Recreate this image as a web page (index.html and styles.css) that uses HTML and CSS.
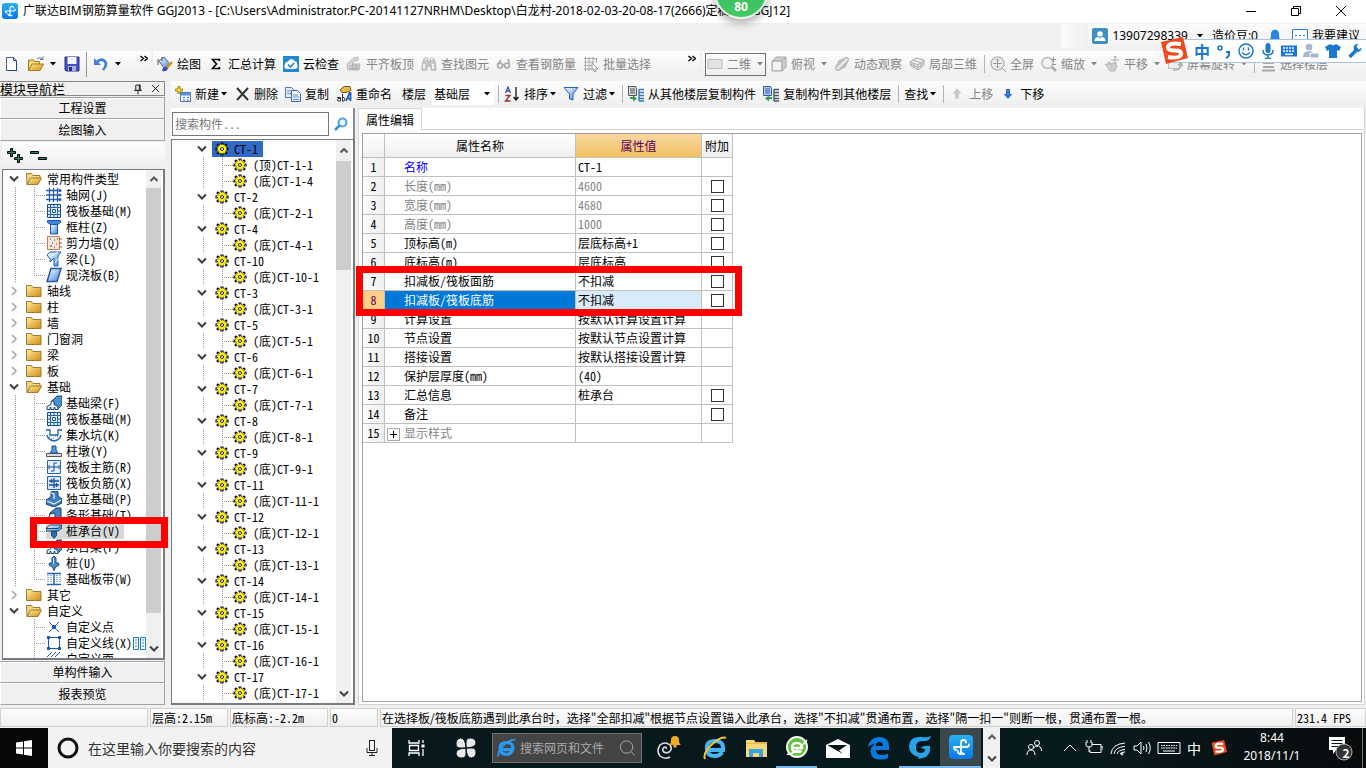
FILE: index.html
```html
<!DOCTYPE html>
<html lang="zh-CN">
<head>
<meta charset="utf-8">
<title>广联达BIM钢筋算量软件 GGJ2013</title>
<link rel="stylesheet" href="styles.css">
</head>
<body>
<svg class="defs" aria-hidden="true">
<defs>
<linearGradient id="gold" x2="1" y2="1"><stop offset="0" stop-color="#ffeea0"/><stop offset="1" stop-color="#d08e10"/></linearGradient>
<linearGradient id="blue" x2="1" y2="1"><stop offset="0" stop-color="#fff"/><stop offset="1" stop-color="#3f86dd"/></linearGradient>
<linearGradient id="app" y2="1" x2="0"><stop offset="0" stop-color="#2ab0f5"/><stop offset="1" stop-color="#0878e8"/></linearGradient>
<symbol id="logo" viewBox="0 0 24 24"><rect width="24" height="24" rx="4" fill="url(#app)"/><path d="M12 19V8q0-3 2.500-3T17 7.500M5 12h12q3 0 3-2.500M5 12q0 3 2.500 3M12 19q-3 0-3-2.500M12 12v4q0 3 3 3" fill="none" stroke="#fff" stroke-width="1.800" stroke-linecap="round"/></symbol>
<symbol id="arrow" viewBox="0 0 6 4"><path d="M0 0h6L3 3.500z" fill="currentColor"/></symbol>
<symbol id="more" viewBox="0 0 8 8"><path d="M.5 1l3 2.500-3 2.500M4.500 1l3 2.500-3 2.500" fill="none" stroke="#000" stroke-width="1.400"/></symbol>
<symbol id="down" viewBox="0 0 14 16"><path d="M3 5.500l4 4 4-4" fill="none" stroke="#404040" stroke-width="2"/></symbol>
<symbol id="right" viewBox="0 0 14 16"><path d="M5 4l4 4-4 4" fill="none" stroke="#a6a6a6" stroke-width="1.600"/></symbol>
<symbol id="chev-up" viewBox="0 0 14 16"><path d="M3.500 10L7 6.500l3.500 3.500" fill="none" stroke="#555" stroke-width="2"/></symbol>
<symbol id="new" viewBox="0 0 16 16"><path d="M2.500 1.500h7l3 3v10h-10z" fill="#fff" stroke="#4a6486"/><path d="M9.500 1.500v3h3M12.500 6v8.500h-9" fill="none" stroke="#27446c"/></symbol>
<symbol id="open" viewBox="0 0 16 16"><path d="M.5 14V4h5l1 1.500h5V8" fill="#f5d87a" stroke="#a77a1c"/><path d="M.5 14.500L4 8h11.500L12 14.500z" fill="url(#gold)" stroke="#a77a1c"/><path d="M9 3q3-3 5.500 0M15 0.500v3h-3" fill="none" stroke="#5a7ba5"/></symbol>
<symbol id="save" viewBox="0 0 16 16"><path d="M1 1h14v14H2L1 14z" fill="#4252c0" stroke="#26308a"/><path d="M3.500 1h9v7h-9z" fill="#f2f6ff"/><path d="M4 10h8v5H4z" fill="#aab0d8"/><path d="M5 11h3v4H5z" fill="#232c85"/></symbol>
<symbol id="undo" viewBox="0 0 16 16"><path d="M3 7q5-5.500 8.500-2T10 14" fill="none" stroke="#3e80dc" stroke-width="2.600"/><path d="M1 2v7h7z" fill="#3e80dc"/></symbol>
<symbol id="paint" viewBox="0 0 16 16"><path d="M2 5l5-4 6 7-6 4z" fill="url(#blue)" stroke="#555f78"/><path d="M1 3v6M5 1v4" stroke="#456" fill="none"/><path d="M15 6l-5 6" stroke="#d99a1c" stroke-width="2.500"/><path d="M6 12q3-2 5 0-1 4-6 3z" fill="#324fae"/></symbol>
<symbol id="sigma" viewBox="0 0 16 16"><path d="M11.500 5V3.500h-7L8.500 8l-4 4.500h7V11" fill="none" stroke="#000" stroke-width="1.600"/></symbol>
<symbol id="cloud" viewBox="0 0 16 16"><rect width="16" height="16" fill="#2388cf"/><path d="M3.500 13Q0 12 2 8.500q0-2.500 3-3Q8 1 11.500 5q3 .5 2.500 3 2 4-2 5z" fill="#fff"/><path d="M5 8.500l2.500 2.500L11 7" fill="none" stroke="#2388cf" stroke-width="1.600"/></symbol>
<symbol id="align" viewBox="0 0 16 16"><path d="M1 8l7-6 4-1v3l-4 1-2 3h8l-1 6H2z" fill="#d8d8d8" stroke="#b4b4b4"/><path d="M3 10h10M3 12.500h10M7 8v6M10 8v6" stroke="#aaa"/></symbol>
<symbol id="find" viewBox="0 0 16 16"><path d="M2 6l1.500-4h3L7 6h2l.5-4h3L14 6l1 8h-5v-4H6v4H1z" fill="#c8c8c8" stroke="#b0b0b0"/><path d="M3 8v5M12 8v5M4 3h2M10 3h2" stroke="#fff" stroke-width="1.500"/></symbol>
<symbol id="glass" viewBox="0 0 16 16"><circle cx="4" cy="9.500" r="2.500" fill="#eee" stroke="#aaa" stroke-width="1.600"/><circle cx="11" cy="9.500" r="2.500" fill="#eee" stroke="#aaa" stroke-width="1.600"/><path d="M2 8l3-4M6.500 9h2M13 8V4h-2" fill="none" stroke="#aaa" stroke-width="1.500"/></symbol>
<symbol id="batch" viewBox="0 0 16 16"><path d="M1 2.500h12M1 6h10M1 9.500h8M1 13h8M2.500 1v14M6 1v14M10 1v7M13.500 2v5" stroke="#aaa" fill="none"/><path d="M9 7l6 6h-3l1 2.500-1.500.5-1-3L9 14z" fill="#fff" stroke="#999"/></symbol>
<symbol id="plane" viewBox="0 0 16 16"><path d="M1 3.500h14v9H1z" fill="#e4e4e4" stroke="#bbb"/></symbol>
<symbol id="cube" viewBox="0 0 16 16"><path d="M1 5l4-4h10v10l-4 4H1z" fill="#ccc" stroke="#aaa"/><path d="M1 5h10v10M11 5l4-4" fill="none" stroke="#aaa"/><path d="M2 6h8v8H2z" fill="#f3f3f3"/></symbol>
<symbol id="orbit" viewBox="0 0 16 16"><circle cx="8" cy="8" r="5" fill="#c4c4c4"/><ellipse cx="8" cy="8" rx="8" ry="3" transform="rotate(-45 8 8)" fill="none" stroke="#bbb" stroke-width="1.500"/><path d="M5 11l6-6" stroke="#fff" stroke-width="1.500"/></symbol>
<symbol id="local" viewBox="0 0 16 16"><path d="M1 6l6-4 8 2v5l-6 5-7-4zM1 6l8 3 6-5M9 9v5M4 4l8 3M5 7v5M12 6.500v5M1.500 8l7.500 3.500 6-5" fill="#eee" stroke="#aaa"/></symbol>
<symbol id="full" viewBox="0 0 16 16"><circle cx="7.500" cy="7.500" r="6.500" fill="#eee" stroke="#bbb" stroke-width="1.500"/><path d="M7.500 3v9M3 7.500h9M6 4.500L7.500 3 9 4.500M6 10.500L7.500 12 9 10.500M12 12l4 4" fill="none" stroke="#999"/></symbol>
<symbol id="zoom" viewBox="0 0 16 16"><circle cx="6.500" cy="7" r="5.500" fill="#f4f4f4" stroke="#bbb" stroke-width="1.500"/><path d="M11 11l4 4" stroke="#aaa" stroke-width="2.500"/><path d="M12.500 1v5M10 3.500h5M11 8.500h4" stroke="#999"/></symbol>
<symbol id="pan" viewBox="0 0 16 16"><path d="M1 8l3 1V6h2l1 3 1-2h4l1 3-2 5H6z" fill="#ccc" stroke="#bbb"/><path d="M11 0v8M7 4h8M9.500 1.500L11 0l1.500 1.500" fill="none" stroke="#aaa"/></symbol>
<symbol id="rotate" viewBox="0 0 16 16"><path d="M1.500 2.500h11v10h-11z" fill="#eee" stroke="#bbb"/><path d="M6 14q8 1 8-6M11 9l3-2 2 3" fill="none" stroke="#aaa" stroke-width="1.500"/></symbol>
<symbol id="floors" viewBox="0 0 16 16"><path d="M3 3h11M3 7h11M3 11h11M2 14.500h13" stroke="#aaa" stroke-width="2"/></symbol>
<symbol id="add" viewBox="0 0 16 16"><path d="M5.500 6.500h10v9h-10z" fill="#f4f8ff" stroke="#4f78b8"/><path d="M5.500 7h10v2.500h-10z" fill="#5f8fd8"/><path d="M8 11.500h2M12 11.500h2M8 14h2M12 14h2" stroke="#4f78b8"/><path d="M3 .5h2V3h2.500v2H5v2.500H3V5H.5V3H3z" fill="#ffe34d" stroke="#a88700"/></symbol>
<symbol id="del" viewBox="0 0 16 16"><path d="M3 2l11 12M14 2L3 14" stroke="#333" stroke-width="2"/></symbol>
<symbol id="copy" viewBox="0 0 16 16"><path d="M.5 1.500h6l2 2v8h-8z" fill="#e2eeff" stroke="#4a78c4"/><path d="M6.500 4.500h6l3 3v8h-9z" fill="#f2f7ff" stroke="#3a68b4"/><path d="M2 5h4M2 7.500h4M8 9h5M8 11h6M8 13.500h6" stroke="#5c8ad0"/></symbol>
<symbol id="rename" viewBox="0 0 16 16"><path d="M4 4l4-3.500h6l1 4-5 2H6z" fill="#e9b943" stroke="#6f581d"/><path d="M1 11.500h3.500V15H2q-1.500-1.500 0-2.500h2M6.500 8v7H8q2-2 0-3.500H6.500" fill="none" stroke="#333"/><path d="M10 15l3.500-8h1v8M11 12.500h4" fill="none" stroke="#285cb8" stroke-width="1.800"/></symbol>
<symbol id="sort" viewBox="0 0 16 16"><path d="M1.500 7L4 1l2.500 6M2.500 5h3" fill="none" stroke="#3558b0" stroke-width="1.300"/><path d="M1.500 9.500h4.500L1.500 15H6.500" fill="none" stroke="#963232" stroke-width="1.400"/><path d="M12 1v12M9.500 11l2.500 3 2.500-3" fill="none" stroke="#111" stroke-width="1.300"/></symbol>
<symbol id="filter" viewBox="0 0 16 16"><path d="M1 1.500h14L10 8v6l-3.500-1V8z" fill="url(#blue)" stroke="#2c64c0"/></symbol>
<symbol id="from" viewBox="0 0 16 16"><path d="M.5.5h7l1 2v7h-8z" fill="#d8dcdf" stroke="#555"/><path d="M2 3h5M2 5h5M2 7h5" stroke="#555"/><path d="M11 3v12M11 3.500h5M11 6.500h5M11 9.500h5M11 12.500h5M11 15h5" stroke="#3c78b8" stroke-width="1.400"/><path d="M2 11v2h3v2.500l4-3-4-3V11z" fill="#2ea043"/></symbol>
<symbol id="into" viewBox="0 0 16 16"><path d="M.5.5h7l1 2v7h-8z" fill="#b8d0f4" stroke="#2d57a5"/><path d="M2 3h5M2 5h5M2 7h5" stroke="#2d57a5"/><path d="M11 3v12M11 3.500h5M11 6.500h5M11 9.500h5M11 12.500h5M11 15h5" stroke="#4a5a6a" stroke-width="1.400"/><path d="M9 11v2H6v2.500l-4-3 4-3V11z" fill="#2ea043"/></symbol>
<symbol id="up" viewBox="0 0 16 16"><path d="M8 2.500l4.500 5H10v5H6v-5H3.500z" fill="#c8c8c8"/></symbol>
<symbol id="dn" viewBox="0 0 16 16"><path d="M8 13l4.500-5H10V3H6v5H3.500z" fill="#3b6fd6"/></symbol>
<symbol id="folder" viewBox="0 0 16 16"><path d="M.5 13.500V2.500h5l1.500 2h8v9z" fill="url(#gold)" stroke="#9c7a30"/></symbol>
<symbol id="ofolder" viewBox="0 0 16 16"><path d="M1 13.500L.5 2.500h5l1.500 2h7V7" fill="#f5d87a" stroke="#9c7a30"/><path d="M1 13.500L4.500 7h11L12 13.500z" fill="url(#gold)" stroke="#9c7a30"/></symbol>
<symbol id="gear" viewBox="0 0 16 16"><path d="M7 3V2h2v1M7 13v1h2v-1M3 7H2v2h1M13 7h1v2h-1M4 5L3 4l1-1 1 1M12 5l1-1-1-1-1 1M4 11l-1 1 1 1 1-1M12 11l1 1-1 1-1-1" fill="none" stroke="#111" stroke-width="1.200"/><circle cx="8" cy="8" r="4.600" fill="#fff200" stroke="#3b3800" stroke-dasharray="1.500 1"/><circle cx="8" cy="8" r="1.500" fill="#fff" stroke="#222"/></symbol>
<symbol id="axis" viewBox="0 0 16 16"><path d="M0 3.500h14M0 8h14M0 12.500h14M3.500 1v14M7.500 1v14M11.500 1v14" stroke="#2b5bb8" stroke-width="1.300"/><circle cx="14" cy="3.500" r="1.500" fill="#2b5bb8"/><circle cx="14" cy="8" r="1.500" fill="#2b5bb8"/><circle cx="14" cy="12.500" r="1.500" fill="#2b5bb8"/></symbol>
<symbol id="raft" viewBox="0 0 16 16"><path d="M1.500 1.500h13v13h-13z" fill="#e6f2ff" stroke="#124a8c"/><path d="M4.500 4.500h7v7h-7zM6.500 6.500h3v3h-3zM4.500 1v3M11.500 1v3M4.500 12v3M11.500 12v3M1 4.500h3M1 11.500h3M12 4.500h3M12 11.500h3M8 1v3M8 12v3M1 8h3M12 8h3" fill="none" stroke="#1d5aa0"/></symbol>
<symbol id="column" viewBox="0 0 16 16"><path d="M1.500 1.500h13v2l-3 2h-7l-3-2z" fill="#3f86dd" stroke="#1f52a8"/><path d="M4.500 5.500h7V15h-7z" fill="url(#blue)" stroke="#1f52a8"/></symbol>
<symbol id="wall" viewBox="0 0 16 16"><path d="M1.500 1.500h12v13h-12z" fill="#f2e5da" stroke="#c98050"/><path d="M4 4h1M8 5h1M6 8h1M10 9h1M4 11h2M8 12h1M11 4h1" stroke="#444"/><path d="M13 4h3M13 8h3M13 12h3" stroke="#c04c20"/></symbol>
<symbol id="beam" viewBox="0 0 16 16"><path d="M1 4l3-3h11l-3 4v10H8V7l-4 4V8z" fill="url(#blue)" stroke="#2264b0"/><path d="M4 6l8-5M9 12l4-5" stroke="#fff"/></symbol>
<symbol id="slab" viewBox="0 0 16 16"><path d="M5 1.500h10L11 14.500H1z" fill="url(#blue)" stroke="#2758a8" stroke-width="1.500"/></symbol>
<symbol id="fbeam" viewBox="0 0 16 16"><path d="M5 7l6-6h5v9l-4 4" fill="#4f8fce" stroke="#16457c"/><path d="M1 14.500v-3l4-2V6h3v3.500l4 2v3H9v-2H8v2H5v-2H4v2z" fill="#eaf4ff" stroke="#16457c"/></symbol>
<symbol id="pit" viewBox="0 0 16 16"><path d="M0 3h4v5h8V3h4M1 8q1 5 7 6 6-1 7-6" fill="none" stroke="#2463b4" stroke-width="1.300"/><path d="M3 10h1M7 11h1M11 10h1M9 9h1M5 12h1" stroke="#2463b4"/></symbol>
<symbol id="pier" viewBox="0 0 16 16"><path d="M.5 10.500h15v3H.5z" fill="#ddd" stroke="#555"/><path d="M4 10l2-3V3h4v4l2 3z" fill="#5a9be0" stroke="#174f98"/></symbol>
<symbol id="rebar" viewBox="0 0 16 16"><path d="M1.500 1.500h13v13h-13z" fill="#e6f2ff" stroke="#2463b4"/><path d="M8 4v8M3 8h10M8 4h3M5 12h3M3 6v4M13 6v4" fill="none" stroke="#174f98"/></symbol>
<symbol id="rebar2" viewBox="0 0 16 16"><path d="M1.500 1.500h13v13h-13z" fill="#d6e8fd" stroke="#2463b4"/><path d="M3 6h10M3 10h10M8 3v10M5.500 4v4M10.500 8v4" fill="none" stroke="#174f98" stroke-width="1.300"/></symbol>
<symbol id="isolated" viewBox="0 0 16 16"><path d="M0 9l5-3V1l4-1 3 1v4l4 3v4l-8 4-8-3z" fill="#3f7fbd" stroke="#123c6c"/><path d="M5 2l3 1v5M1 10l7 3 7-4" fill="none" stroke="#d9ecff" stroke-width="1.300"/></symbol>
<symbol id="strip" viewBox="0 0 16 16"><path d="M1 13l3-3V6l6-5h5v9l-5 4z" fill="#4684c2" stroke="#123c6c"/><path d="M4 7l5-1v7H2z" fill="#f0f7ff" stroke="#123c6c"/></symbol>
<symbol id="cap" viewBox="0 0 16 16"><path d="M0 5l4-3h12v3l-4 3H0z" fill="url(#blue)" stroke="#174878"/><path d="M0 5.500h12L16 2.500" fill="none" stroke="#174878"/><path d="M5.500 8.500h5v4L8 15.500l-2.500-3z" fill="#2e6eaf" stroke="#174878"/></symbol>
<symbol id="pile" viewBox="0 0 16 16"><path d="M6 3l2-2 2 2v5h2.500l.5 2-3.500 2L8 15.500 6.500 12 3 10l.5-2H6z" fill="#4a8acc" stroke="#174878"/><path d="M7.500 3v6" stroke="#d9ecff"/></symbol>
<symbol id="band" viewBox="0 0 16 16"><path d="M1 2.500h14M1 13.500h14M8 3v10" stroke="#2463b4" stroke-width="1.500"/><path d="M2 4v8M5 4v8M11 4v8M14 4v8" stroke="#2463b4" stroke-dasharray="1 1"/></symbol>
<symbol id="point" viewBox="0 0 16 16"><path d="M3 3l10 10M13 3L3 13" stroke="#1d5ab0"/><path d="M6 6h4v4H6z" fill="#1d5ab0"/></symbol>
<symbol id="line" viewBox="0 0 16 16"><path d="M2.500 2.500h11v11h-11z" fill="none" stroke="#1d5ab0"/><path d="M1 1h3v3H1zM12 1h3v3h-3zM1 12h3v3H1zM12 12h3v3h-3z" fill="#1d5ab0"/></symbol>
<symbol id="hatch" viewBox="0 0 16 16"><path d="M1 6l5-5M5 6l5-5M9 6l5-5M1 12l4-4M6 12l4-4M11 12l4-4" stroke="#1d5ab0"/></symbol>
<symbol id="cols" viewBox="0 0 13 15"><path d="M.5 1.500h5v12h-5zM7.500 1.500h5v12h-5z" fill="#fff" stroke="#1d78d0"/><path d="M2 4h2M2 7h2M2 10h2M9 4h2M9 7h2M9 10h2" stroke="#1d78d0"/></symbol>
<symbol id="lens" viewBox="0 0 16 16"><circle cx="9.500" cy="6.500" r="4" fill="#eefaff" stroke="#4fa3e4" stroke-width="2"/><path d="M6.500 9.500L2 14" stroke="#3c8ed8" stroke-width="2.500"/></symbol>
<symbol id="pin" viewBox="0 0 16 16"><path d="M5.500 3.500h5v6M5.500 3.500v6M3.500 9.500h9M8 9v5M9.500 3v6" fill="none" stroke="#000"/></symbol>
<symbol id="close" viewBox="0 0 16 16"><path d="M3.500 3.500l8 8M11.500 3.500l-8 8" stroke="#000"/></symbol>
<symbol id="sogou" viewBox="0 0 28 28"><path d="M1 5L23 0l5 21L6 27z" fill="#ee4a1e"/><path d="M21 7Q8 5 8 10.500q0 3 7 3t6 4Q19 22 8 20" fill="none" stroke="#fff" stroke-width="4"/></symbol>
<symbol id="ie" viewBox="0 0 24 24"><path d="M5 14h15q1-9-8-9t-8 8q0 7 8 7 5 0 7-4" fill="none" stroke="#47b4f4" stroke-width="4"/><path d="M2 23Q-1 16 13 5q7-5 10-3" fill="none" stroke="#f6c52d" stroke-width="2"/></symbol>
<symbol id="ieblue" viewBox="0 0 24 24"><path d="M5 14h15q1-9-8-9t-8 8q0 7 8 7 5 0 7-4" fill="none" stroke="#2a9af0" stroke-width="4"/><path d="M2 23Q-1 16 13 5q7-5 10-3" fill="none" stroke="#2a9af0" stroke-width="2"/></symbol>
</defs>
</svg>

<div class="window">
  <header class="titlebar">
    <svg class="app-icon"><use href="#logo"/></svg>
    <h1>广联达BIM钢筋算量软件 GGJ2013 - [C:\Users\Administrator.PC-20141127NRHM\Desktop\白龙村-2018-02-03-20-08-17(2666)定稿版1.GGJ12]</h1>
    <div class="captions">
      <button aria-label="最小化"><svg viewBox="0 0 12 12"><path d="M1 6.500h10" stroke="#000"/></svg></button>
      <button aria-label="还原"><svg viewBox="0 0 12 12"><path d="M1.500 3.500h7v7h-7zM3.500 3V1.500h7v7H9" fill="none" stroke="#000"/></svg></button>
      <button aria-label="关闭"><svg viewBox="0 0 12 12"><path d="M1 1l10 10M11 1L1 11" stroke="#000"/></svg></button>
    </div>
  </header>

  <div class="accountbar">
    <span class="stub"></span>
    <div class="account">
      <button><svg class="ic" viewBox="0 0 16 16"><rect width="16" height="16" rx="2" fill="#3f8fbf"/><circle cx="8" cy="6" r="2.800" fill="#fff"/><path d="M2.500 13q0-4 4-4l1.500 1.500L9.500 9q4 0 4 4z" fill="#fff"/></svg><span>13907298339</span><svg class="ar"><use href="#arrow"/></svg></button>
      <button>造价豆:0</button>
      <button aria-label="通知"><svg class="ic" viewBox="0 0 16 16"><path d="M2 13Q4 11 4 6q0-4 4-4.500Q12 2 12 6q0 5 2 7z" fill="#2a85e8"/></svg></button>
      <button class="advice"><svg class="ic" viewBox="0 0 16 16"><path d="M.5 1.500h15v12H.5z" fill="#fff" stroke="#2a7fe0"/><path d="M3 7.500h2M7 7.500h2M11 7.500h2" stroke="#2a7fe0"/></svg><span>我要建议</span></button>
    </div>
  </div>

  <nav class="toolbar main-tools">
    <div class="group files">
      <button aria-label="新建"><svg class="ic"><use href="#new"/></svg></button>
      <button aria-label="打开"><svg class="ic"><use href="#open"/></svg><svg class="ar"><use href="#arrow"/></svg></button>
      <button aria-label="保存"><svg class="ic"><use href="#save"/></svg></button>
      <i class="sep"></i>
      <button aria-label="撤销"><svg class="ic"><use href="#undo"/></svg><svg class="ar"><use href="#arrow"/></svg></button>
      <button class="overflow" aria-label="更多"><svg class="mo"><use href="#more"/></svg></button>
    </div>
    <div class="group draw">
      <button><svg class="ic"><use href="#paint"/></svg>绘图</button>
      <button><svg class="ic"><use href="#sigma"/></svg>汇总计算</button>
      <button><svg class="ic"><use href="#cloud"/></svg>云检查</button>
      <button disabled><svg class="ic"><use href="#align"/></svg>平齐板顶</button>
      <button disabled><svg class="ic"><use href="#find"/></svg>查找图元</button>
      <button disabled><svg class="ic"><use href="#glass"/></svg>查看钢筋量</button>
      <button disabled><svg class="ic"><use href="#batch"/></svg>批量选择</button>
      <button class="overflow" aria-label="更多"><svg class="mo"><use href="#more"/></svg></button>
    </div>
    <div class="group view">
      <button class="boxed" disabled><svg class="ic"><use href="#plane"/></svg>二维<svg class="ar"><use href="#arrow"/></svg></button>
      <button disabled><svg class="ic"><use href="#cube"/></svg>俯视<svg class="ar"><use href="#arrow"/></svg></button>
      <button disabled><svg class="ic"><use href="#orbit"/></svg>动态观察</button>
      <button disabled><svg class="ic"><use href="#local"/></svg>局部三维</button>
      <i class="sep"></i>
      <button disabled><svg class="ic"><use href="#full"/></svg>全屏</button>
      <button disabled><svg class="ic"><use href="#zoom"/></svg>缩放<svg class="ar"><use href="#arrow"/></svg></button>
      <button disabled><svg class="ic"><use href="#pan"/></svg>平移<svg class="ar"><use href="#arrow"/></svg></button>
      <button disabled><svg class="ic"><use href="#rotate"/></svg>屏幕旋转<svg class="ar"><use href="#arrow"/></svg></button>
      <i class="sep"></i>
      <button disabled><svg class="ic"><use href="#floors"/></svg>选择楼层</button>
    </div>
  </nav>

  <div class="workspace">
    <aside class="modules">
      <div class="dock-title"><h2>模块导航栏</h2><button aria-label="固定"><svg><use href="#pin"/></svg></button><button aria-label="关闭"><svg><use href="#close"/></svg></button></div>
      <button class="module">工程设置</button>
      <button class="module">绘图输入</button>
      <div class="expanders">
        <button aria-label="全部展开"><svg viewBox="0 0 17 16"><path d="M3.500.5h2v3h3v2h-3v3h-2v-3h-3v-2h3zM10.500 6.500h2v3h3v2h-3v3h-2v-3h-3v-2h3z" fill="#1a8a78" stroke="#000"/></svg></button>
        <button aria-label="全部折叠"><svg viewBox="0 0 17 16"><path d="M.5 3.500h8v2h-8zM8.500 9.500h8v2h-8z" fill="#1a8a78" stroke="#000"/></svg></button>
      </div>
      <div class="treebox">
        <ul class="tree types">
          <li><svg class="tg"><use href="#down"/></svg><svg class="ic"><use href="#ofolder"/></svg>常用构件类型</li>
          <li class="kid"><svg class="ic"><use href="#axis"/></svg>轴网(J)</li>
          <li class="kid"><svg class="ic"><use href="#raft"/></svg>筏板基础(M)</li>
          <li class="kid"><svg class="ic"><use href="#column"/></svg>框柱(Z)</li>
          <li class="kid"><svg class="ic"><use href="#wall"/></svg>剪力墙(Q)</li>
          <li class="kid"><svg class="ic"><use href="#beam"/></svg>梁(L)</li>
          <li class="kid last"><svg class="ic"><use href="#slab"/></svg>现浇板(B)</li>
          <li><svg class="tg"><use href="#right"/></svg><svg class="ic"><use href="#folder"/></svg>轴线</li>
          <li><svg class="tg"><use href="#right"/></svg><svg class="ic"><use href="#folder"/></svg>柱</li>
          <li><svg class="tg"><use href="#right"/></svg><svg class="ic"><use href="#folder"/></svg>墙</li>
          <li><svg class="tg"><use href="#right"/></svg><svg class="ic"><use href="#folder"/></svg>门窗洞</li>
          <li><svg class="tg"><use href="#right"/></svg><svg class="ic"><use href="#folder"/></svg>梁</li>
          <li><svg class="tg"><use href="#right"/></svg><svg class="ic"><use href="#folder"/></svg>板</li>
          <li><svg class="tg"><use href="#down"/></svg><svg class="ic"><use href="#ofolder"/></svg>基础</li>
          <li class="kid"><svg class="ic"><use href="#fbeam"/></svg>基础梁(F)</li>
          <li class="kid"><svg class="ic"><use href="#raft"/></svg>筏板基础(M)</li>
          <li class="kid"><svg class="ic"><use href="#pit"/></svg>集水坑(K)</li>
          <li class="kid"><svg class="ic"><use href="#pier"/></svg>柱墩(Y)</li>
          <li class="kid"><svg class="ic"><use href="#rebar"/></svg>筏板主筋(R)</li>
          <li class="kid"><svg class="ic"><use href="#rebar2"/></svg>筏板负筋(X)</li>
          <li class="kid"><svg class="ic"><use href="#isolated"/></svg>独立基础(P)</li>
          <li class="kid"><svg class="ic"><use href="#strip"/></svg>条形基础(T)</li>
          <li class="kid"><span class="current"><svg class="ic"><use href="#cap"/></svg>桩承台(V)</span></li>
          <li class="kid"><svg class="ic"><use href="#fbeam"/></svg>承台梁(F)</li>
          <li class="kid"><svg class="ic"><use href="#pile"/></svg>桩(U)</li>
          <li class="kid last"><svg class="ic"><use href="#band"/></svg>基础板带(W)</li>
          <li><svg class="tg"><use href="#right"/></svg><svg class="ic"><use href="#folder"/></svg>其它</li>
          <li><svg class="tg"><use href="#down"/></svg><svg class="ic"><use href="#ofolder"/></svg>自定义</li>
          <li class="kid end"><svg class="ic"><use href="#point"/></svg>自定义点</li>
          <li class="kid end"><svg class="ic"><use href="#line"/></svg>自定义线(X)<svg class="tag"><use href="#cols"/></svg></li>
          <li class="kid end"><svg class="ic"><use href="#hatch"/></svg>自定义面</li>
        </ul>
        <div class="scroll types-scroll"><svg><use href="#chev-up"/></svg><i></i><svg><use href="#down"/></svg></div>
      </div>
      <button class="module">单构件输入</button>
      <button class="module">报表预览</button>
    </aside>

    <main class="editor">
      <nav class="toolbar edit-tools">
        <button><svg class="ic"><use href="#add"/></svg>新建<svg class="ar"><use href="#arrow"/></svg></button>
        <button><svg class="ic"><use href="#del"/></svg>删除</button>
        <button><svg class="ic"><use href="#copy"/></svg>复制</button>
        <button><svg class="ic"><use href="#rename"/></svg>重命名</button>
        <label class="floor">楼层 <span class="pick"><select><option>基础层</option></select><svg class="ar"><use href="#arrow"/></svg></span></label>
        <i class="sep"></i>
        <button><svg class="ic"><use href="#sort"/></svg>排序<svg class="ar"><use href="#arrow"/></svg></button>
        <button><svg class="ic"><use href="#filter"/></svg>过滤<svg class="ar"><use href="#arrow"/></svg></button>
        <i class="sep"></i>
        <button><svg class="ic"><use href="#from"/></svg>从其他楼层复制构件</button>
        <button><svg class="ic"><use href="#into"/></svg>复制构件到其他楼层</button>
        <i class="sep"></i>
        <button>查找<svg class="ar"><use href="#arrow"/></svg></button>
        <i class="sep"></i>
        <button disabled><svg class="ic"><use href="#up"/></svg>上移</button>
        <button><svg class="ic"><use href="#dn"/></svg>下移</button>
      </nav>
      <div class="panes">
        <section class="components">
          <div class="search"><input type="text" placeholder="搜索构件..." aria-label="搜索构件"><button aria-label="搜索"><svg class="ic"><use href="#lens"/></svg></button></div>
          <div class="treebox">
            <ul class="tree parts">
              <li><svg class="tg"><use href="#down"/></svg><span class="selected"><svg class="ic"><use href="#gear"/></svg>CT-1</span></li>
              <li class="kid"><svg class="ic"><use href="#gear"/></svg>(顶)CT-1-1</li>
              <li class="kid last"><svg class="ic"><use href="#gear"/></svg>(底)CT-1-4</li>
              <li><svg class="tg"><use href="#down"/></svg><svg class="ic"><use href="#gear"/></svg>CT-2</li>
              <li class="kid last"><svg class="ic"><use href="#gear"/></svg>(底)CT-2-1</li>
              <li><svg class="tg"><use href="#down"/></svg><svg class="ic"><use href="#gear"/></svg>CT-4</li>
              <li class="kid last"><svg class="ic"><use href="#gear"/></svg>(底)CT-4-1</li>
              <li><svg class="tg"><use href="#down"/></svg><svg class="ic"><use href="#gear"/></svg>CT-10</li>
              <li class="kid last"><svg class="ic"><use href="#gear"/></svg>(底)CT-10-1</li>
              <li><svg class="tg"><use href="#down"/></svg><svg class="ic"><use href="#gear"/></svg>CT-3</li>
              <li class="kid last"><svg class="ic"><use href="#gear"/></svg>(底)CT-3-1</li>
              <li><svg class="tg"><use href="#down"/></svg><svg class="ic"><use href="#gear"/></svg>CT-5</li>
              <li class="kid last"><svg class="ic"><use href="#gear"/></svg>(底)CT-5-1</li>
              <li><svg class="tg"><use href="#down"/></svg><svg class="ic"><use href="#gear"/></svg>CT-6</li>
              <li class="kid last"><svg class="ic"><use href="#gear"/></svg>(底)CT-6-1</li>
              <li><svg class="tg"><use href="#down"/></svg><svg class="ic"><use href="#gear"/></svg>CT-7</li>
              <li class="kid last"><svg class="ic"><use href="#gear"/></svg>(底)CT-7-1</li>
              <li><svg class="tg"><use href="#down"/></svg><svg class="ic"><use href="#gear"/></svg>CT-8</li>
              <li class="kid last"><svg class="ic"><use href="#gear"/></svg>(底)CT-8-1</li>
              <li><svg class="tg"><use href="#down"/></svg><svg class="ic"><use href="#gear"/></svg>CT-9</li>
              <li class="kid last"><svg class="ic"><use href="#gear"/></svg>(底)CT-9-1</li>
              <li><svg class="tg"><use href="#down"/></svg><svg class="ic"><use href="#gear"/></svg>CT-11</li>
              <li class="kid last"><svg class="ic"><use href="#gear"/></svg>(底)CT-11-1</li>
              <li><svg class="tg"><use href="#down"/></svg><svg class="ic"><use href="#gear"/></svg>CT-12</li>
              <li class="kid last"><svg class="ic"><use href="#gear"/></svg>(底)CT-12-1</li>
              <li><svg class="tg"><use href="#down"/></svg><svg class="ic"><use href="#gear"/></svg>CT-13</li>
              <li class="kid last"><svg class="ic"><use href="#gear"/></svg>(底)CT-13-1</li>
              <li><svg class="tg"><use href="#down"/></svg><svg class="ic"><use href="#gear"/></svg>CT-14</li>
              <li class="kid last"><svg class="ic"><use href="#gear"/></svg>(底)CT-14-1</li>
              <li><svg class="tg"><use href="#down"/></svg><svg class="ic"><use href="#gear"/></svg>CT-15</li>
              <li class="kid last"><svg class="ic"><use href="#gear"/></svg>(底)CT-15-1</li>
              <li><svg class="tg"><use href="#down"/></svg><svg class="ic"><use href="#gear"/></svg>CT-16</li>
              <li class="kid last"><svg class="ic"><use href="#gear"/></svg>(底)CT-16-1</li>
              <li><svg class="tg"><use href="#down"/></svg><svg class="ic"><use href="#gear"/></svg>CT-17</li>
              <li class="kid last"><svg class="ic"><use href="#gear"/></svg>(底)CT-17-1</li>
            </ul>
            <div class="scroll parts-scroll"><svg><use href="#chev-up"/></svg><i></i><svg><use href="#down"/></svg></div>
          </div>
        </section>
        <section class="props">
          <div class="tabs"><button class="tab">属性编辑</button></div>
          <div class="sheet">
            <table>
              <thead><tr><th class="no"></th><th class="name">属性名称</th><th class="value">属性值</th><th class="extra">附加</th></tr></thead>
              <tbody>
                <tr class="key"><th>1</th><td>名称</td><td>CT-1</td><td></td></tr>
                <tr class="dim"><th>2</th><td>长度(mm)</td><td>4600</td><td><input type="checkbox" aria-label="长度附加"></td></tr>
                <tr class="dim"><th>3</th><td>宽度(mm)</td><td>4680</td><td><input type="checkbox" aria-label="宽度附加"></td></tr>
                <tr class="dim"><th>4</th><td>高度(mm)</td><td>1000</td><td><input type="checkbox" aria-label="高度附加"></td></tr>
                <tr><th>5</th><td>顶标高(m)</td><td>层底标高+1</td><td><input type="checkbox" aria-label="顶标高附加"></td></tr>
                <tr><th>6</th><td>底标高(m)</td><td>层底标高</td><td><input type="checkbox" aria-label="底标高附加"></td></tr>
                <tr><th>7</th><td>扣减板/筏板面筋</td><td>不扣减</td><td><input type="checkbox" aria-label="面筋附加"></td></tr>
                <tr class="active"><th>8</th><td>扣减板/筏板底筋</td><td>不扣减</td><td><input type="checkbox" aria-label="底筋附加"></td></tr>
                <tr><th>9</th><td>计算设置</td><td>按默认计算设置计算</td><td></td></tr>
                <tr><th>10</th><td>节点设置</td><td>按默认节点设置计算</td><td></td></tr>
                <tr><th>11</th><td>搭接设置</td><td>按默认搭接设置计算</td><td></td></tr>
                <tr><th>12</th><td>保护层厚度(mm)</td><td>(40)</td><td></td></tr>
                <tr><th>13</th><td>汇总信息</td><td>桩承台</td><td><input type="checkbox" aria-label="汇总信息附加"></td></tr>
                <tr><th>14</th><td>备注</td><td></td><td><input type="checkbox" aria-label="备注附加"></td></tr>
                <tr class="folded"><th>15</th><td><button aria-label="展开"><svg viewBox="0 0 11 11"><path d="M2 5.500h7M5.500 2v7" stroke="#000"/></svg></button>显示样式</td><td></td><td></td></tr>
              </tbody>
            </table>
          </div>
        </section>
      </div>
    </main>
  </div>

  <footer class="status">
    <span class="cell blank"></span>
    <span class="cell height">层高:2.15m</span>
    <span class="cell base">底标高:-2.2m</span>
    <span class="cell count">0</span>
    <span class="cell tip">在选择板/筏板底筋遇到此承台时，选择"全部扣减"根据节点设置锚入此承台，选择"不扣减"贯通布置，选择"隔一扣一"则断一根，贯通布置一根。</span>
    <span class="cell fps">231.4 FPS</span>
  </footer>

  <div class="taskbar">
    <button class="start" aria-label="开始"><svg viewBox="0 0 16 16"><path d="M0 2.500l7-1V7.500H0zM8 1.300L16 0v7.500H8zM0 8.500h7v6l-7-1zM8 8.500h8V16l-8-1.300z" fill="#fff"/></svg></button>
    <label class="cortana"><svg class="ring" viewBox="0 0 22 22"><circle cx="11" cy="11" r="9" fill="none" stroke="#111" stroke-width="3"/></svg><input type="text" placeholder="在这里输入你要搜索的内容"><svg class="mic" viewBox="0 0 12 18"><rect x="3.500" y="1.500" width="5" height="10" fill="none" stroke="#222"/><path d="M1 9v4.500h10V9M6 13.500V17M3 16.500h6" fill="none" stroke="#222"/></svg></label>
    <button class="tb taskview" aria-label="任务视图"><svg viewBox="0 0 24 24"><path d="M5 4v3h10V4M5 20v-3h10v3M5.500 9.500h9v5h-9zM19 4v3M19 13v7" fill="none" stroke="#fff" stroke-width="1.300"/><path d="M17.500 8.500h3v3h-3z" fill="#fff"/></svg></button>
    <button class="tb clover" aria-label="浏览器"><svg viewBox="0 0 24 24"><path d="M12 12H6q-4 0-4-4.500T6.500 2q5 0 5.500 10zM12 12V6q0-4 4.500-4T22 6.500q0 5-10 5.500zM12 12h6q4 0 4 4.500T17.500 22q-5 0-5.500-10zM12 12v6q0 4-4.500 4T2 17.500q0-5 10-5.500z" fill="#e8e8e8" stroke="#06171b"/></svg></button>
    <label class="websearch"><svg class="ie" viewBox="0 0 24 24"><use href="#ieblue"/></svg><input type="text" placeholder="搜索网页和文件"><svg class="ie" viewBox="0 0 20 20"><circle cx="9" cy="9" r="6.500" fill="none" stroke="#aaa"/><path d="M14 14l3.500 4" stroke="#aaa"/></svg></label>
    <div class="apps">
      <button class="tb" aria-label="提醒"><svg viewBox="0 0 28 28"><path d="M12 15q1-2-1-2-3 1-2 4 2 3 6 1 4-3 1-7-5-4-10 0-4 6 0 11 5 4 10 1" fill="none" stroke="#ddd" stroke-width="1.600"/><path d="M15 11q2-1 2-5 0-4 4-4t4 4q0 4 2 5z" fill="#f0ac1c"/><circle cx="21" cy="12" r="1.800" fill="#f0ac1c"/></svg></button>
      <button class="tb" aria-label="Internet Explorer"><svg viewBox="0 0 24 24"><use href="#ie"/></svg></button>
      <button class="tb" aria-label="文件资源管理器"><svg viewBox="0 0 24 24"><path d="M2 4h8l1.500 2H23v15H2z" fill="#f8d775"/><path d="M2 7h8l1-1h12v2H2z" fill="#e7b845"/><path d="M5 21v-8h14v8h-4v-4H9v4z" fill="#35a3e8"/></svg></button>
      <button class="tb running" aria-label="安全浏览器"><svg viewBox="0 0 24 24"><circle cx="12" cy="12" r="11" fill="#f4f8f0"/><circle cx="12" cy="12" r="9" fill="#5fc032"/><path d="M7 13h10q0-5-5-5t-5 4.500T12 17q3 0 4.500-1.500" fill="none" stroke="#fff" stroke-width="2.500"/><path d="M2 19Q8 21 22 5" fill="none" stroke="#fff" stroke-width="1.500"/></svg></button>
      <button class="tb" aria-label="邮件"><svg viewBox="0 0 24 24"><path d="M0 9l12-6 12 6v13H0z" fill="#fff"/><path d="M2 9h19l-8 5.500 4 3.500L2 9.500z" fill="#06171b"/></svg></button>
      <button class="tb" aria-label="Edge"><svg viewBox="0 0 24 24"><path d="M1 11Q3 1 12.500 1 22 1 22 11v3H8.500q.5 5 6.500 5 3 0 6-1.500V22q-3 1.500-8 1.500-9 0-9.500-8 0-5 5-8-3 0-7.500 3.500zM8.500 10H16q0-4-3.500-4T8.500 10z" fill="#0b7ade"/></svg></button>
      <button class="tb running" aria-label="广联达"><svg viewBox="0 0 24 24"><path d="M23 1q-1 5-7 5-8-1-8 6 0 6 5 6 4 0 4-4l-4-1q2-3 9-2 1 10-7 12l-5 1 1-2Q1 20 1 11 2 1 13 2q6 1 10-1z" fill="#25a4ec"/></svg></button>
      <button class="tb running on" aria-label="钢筋算量"><svg><use href="#logo"/></svg></button>
    </div>
    <div class="pager"><button aria-label="上翻"><svg><use href="#chev-up"/></svg></button><button aria-label="下翻"><svg><use href="#down"/></svg></button></div>
    <div class="tray">
      <button aria-label="人脉"><svg viewBox="0 0 18 18"><circle cx="6" cy="8" r="2.500"/><circle cx="12" cy="4" r="2.500"/><path d="M2 16q0-5 4-5t4 5M8.500 9q2-2.500 5-2 3.500 1 3 5"/></svg></button>
      <button aria-label="显示隐藏的图标" class="wide"><svg viewBox="0 0 18 18"><path d="M3 12l6-6 6 6"/></svg></button>
      <button aria-label="电池"><svg viewBox="0 0 18 18"><path d="M7 5.500h9v8H5V11M16 8h2v3M1 3v3q0 2 3 2t3-2V3M2 1v3M6 1v3M4 8v5"/></svg></button>
      <button aria-label="网络"><svg viewBox="0 0 18 18"><path d="M2 15Q3 5 16 4M5 15Q6 8 16 7.500M8 15q1-4 8-4.500M11 15q1-2 5-2"/><circle cx="13" cy="15" r="1"/></svg></button>
      <button aria-label="音量"><svg viewBox="0 0 18 18"><path d="M1 7h3l4-4v12l-4-4H1zM10.500 7q1 2 0 4M13 5q2 4 0 8M15.500 3q3.500 6 0 12"/></svg></button>
      <button aria-label="触摸键盘" class="kb"><svg viewBox="0 0 24 18"><path d="M1 3.500h22v11H1zM4 6.500h16M4 9h16"/><path d="M6 12h12"/><path d="M3 6.500h18M3 9h18" stroke="#06171b" stroke-dasharray="1 1.500"/></svg></button>
      <button class="lang">中</button>
      <button aria-label="搜狗输入法"><svg class="sg"><use href="#sogou"/></svg></button>
    </div>
    <button class="clock"><span>8:44</span><span>2018/11/1</span></button>
    <button class="notes" aria-label="通知"><svg viewBox="0 0 26 26"><path d="M2 2h16v13H9l-3 4v-4H2z" fill="#fff"/><path d="M4.500 5.500h11M4.500 8.500h11M4.500 11.500h11" stroke="#06171b"/><circle cx="17" cy="17" r="8" fill="#333" stroke="#aaa"/></svg><b>2</b></button>
  </div>

  <div class="meter">80</div>
  <div class="ime">
    <svg class="s"><use href="#sogou"/></svg>
    <button>中</button>
    <button aria-label="标点"><svg viewBox="0 0 16 16"><circle cx="4" cy="5" r="2" fill="none" stroke="#1b78d0" stroke-width="1.500"/><path d="M10 9h3v2q0 3-3 4" fill="none" stroke="#1b78d0" stroke-width="2"/></svg></button>
    <button aria-label="表情"><svg viewBox="0 0 16 16"><circle cx="8" cy="8" r="7" fill="none" stroke="#1b78d0" stroke-width="1.500"/><path d="M5.500 4.500v3M10.500 4.500v3M4 9.500q4 4.500 8 0" fill="none" stroke="#1b78d0" stroke-width="1.300"/></svg></button>
    <button aria-label="语音"><svg viewBox="0 0 16 16"><rect x="5.500" y="0" width="5" height="10" rx="2.500" fill="#1b78d0"/><path d="M3 7q0 5 5 5t5-5M8 12v3M5 15.500h6" fill="none" stroke="#1b78d0" stroke-width="1.500"/></svg></button>
    <button aria-label="键盘"><svg viewBox="0 0 16 16"><path d="M0 2.500h16v11H0z" fill="#1b78d0"/><path d="M2 5h12M2 8h12" stroke="#fff" stroke-width="1.500" stroke-dasharray="2 1"/><path d="M4 11.300h8" stroke="#fff" stroke-width="1.500"/></svg></button>
    <button aria-label="账户"><svg viewBox="0 0 16 16"><circle cx="6" cy="4" r="3.300" fill="#a6b6cc"/><path d="M0 14q0-6 6-6 4 0 5 3v3z" fill="#a6b6cc"/><path d="M7 10h9v5H7z" fill="#a6b6cc" stroke="#fff"/></svg></button>
    <button aria-label="皮肤"><svg viewBox="0 0 16 16"><path d="M5 1q3 2.500 6 0l5 3-2 4-2-1v8H4V7L2 8 0 4z" fill="#1b78d0"/></svg></button>
    <button aria-label="设置"><svg viewBox="0 0 16 16"><path d="M2.500 14L9 7.500" stroke="#1b78d0" stroke-width="3.500"/><path d="M14.500 4.500a4 4 0 1 1-3.500-3.500L9.500 4l2.500 2.500z" fill="#1b78d0"/></svg></button>
  </div>
  <div class="mark mark-type"></div>
  <div class="mark mark-rows"></div>
</div>
</body>
</html>
```
FILE: styles.css
```css
* { box-sizing: border-box; }
body { margin: 0; }
.defs { position: absolute; width: 0; height: 0; }
.window {
  position: relative;
  display: flex;
  flex-direction: column;
  height: 100vh;
  overflow: hidden;
  background: #f0f0f0;
  color: #000;
  font: 12px/16px "Noto Sans CJK SC", sans-serif;
}
svg { display: block; flex: none; }
button, input, select { font: inherit; color: inherit; border: 0; padding: 0; margin: 0; background: none; }
button { display: flex; align-items: center; white-space: nowrap; }
h1, h2 { margin: 0; font-size: 12px; font-weight: 400; white-space: nowrap; }
.ic { width: 16px; height: 16px; }
.ar { width: 6px; height: 4px; }
.mo { width: 8px; height: 8px; }

/* title and account */
.titlebar { display: flex; align-items: center; height: 23px; flex: none; background: #fff; padding: 0 19px 1px 2px; font-family: "Noto Sans", "Noto Sans CJK SC", sans-serif; }
.app-icon { width: 16px; height: 16px; margin-right: 5px; }
.captions { display: flex; gap: 33px; margin-left: auto; }
.captions svg { width: 12px; height: 12px; }
.accountbar { display: flex; justify-content: flex-end; height: 28px; padding: 1px 0 3px; flex: none; }
.stub { width: 25px; background: linear-gradient(90deg, #fafafa, #f1f1f1); margin-right: 2px; }
.account { display: flex; align-items: center; gap: 9px; padding: 0 6px 0 4px; background: linear-gradient(#fcfcfc, #f2f2f2); font-family: "Noto Sans", "Noto Sans CJK SC", sans-serif; }
.account button { gap: 4px; }
.account .ar { margin: 0 0 0 5px; }

/* toolbars */
.toolbar { display: flex; align-items: center; height: 26px; flex: none; white-space: nowrap; background: linear-gradient(#fdfdfd, #eee); }
.toolbar button { gap: 4px; height: 22px; }
.toolbar button:disabled { color: #858585; }
.sep { width: 1px; height: 18px; background: #b4b4b4; flex: none; }
.group { display: flex; align-items: center; gap: 7px; height: 26px; }
.files { width: 153px; padding-left: 4px; gap: 8px; border-right: 2px solid #f0f0f0; }
.files .ar { margin-left: 2px; }
.files .sep { height: 25px; margin: 0 -2px; background: #999; }
.toolbar .overflow { margin-left: auto; height: 12px; align-self: flex-start; margin-top: 2px; }
.draw { width: 549px; padding: 0 4px; border-right: 2px solid #f0f0f0; }
.files .overflow { margin-right: 3px; }
.view { padding-left: 3px; flex: 1; }
.view .sep { margin-right: -2px; }
.view .ar { margin: 0 0 0 2px; }
.toolbar .boxed { border: 1px solid #707070; height: 23px; width: 61px; padding-left: 1px; margin-right: -2px; }
.edit-tools { gap: 7px; padding-left: 4px; margin-bottom: 1px; }
.edit-tools .ar { margin-left: -2px; }
.edit-tools .sep { margin-right: -2px; }
.floor { display: flex; align-items: center; gap: 6px; margin: 0 -3px 0 3px; }
.pick { display: grid; align-items: center; width: 62px; height: 22px; background: #fff; }
.pick select, .pick .ar { grid-area: 1 / 1; }
.pick select { appearance: none; width: 100%; padding: 0 2px; }
.pick .ar { justify-self: end; margin-right: 4px; pointer-events: none; }

/* workspace */
.workspace { display: flex; flex: 1; min-height: 0; margin-top: 4px; }
.modules { width: 165px; flex: none; display: flex; flex-direction: column; font-feature-settings: "hwid"; }
.dock-title { display: flex; align-items: center; height: 15px; flex: none; border: 1px solid #888; border-left: 0; margin-bottom: 1px; line-height: 13px; }
.dock-title h2 { flex: 1; font-size: 13px; }
.dock-title svg { width: 16px; height: 14px; }
.dock-title button + button { margin-left: 2px; }
.module { height: 22px; flex: none; justify-content: center; border: 1px solid #a3a3a3; border-left-color: #fff; box-shadow: inset 0 1px #fff; }
.module + .module { border-top: 0; }
.expanders { display: flex; align-items: center; gap: 6px; padding-left: 5px; height: 27px; flex: none; background: linear-gradient(#fdfdfd, #eee); margin: 1px 0 0 2px; }
.expanders svg { width: 17px; height: 16px; }
.treebox { display: flex; flex: 1; min-height: 0; border: 1px solid #777c84; border-right-width: 2px; border-bottom-width: 2px; background: #fff; margin: 0 0 1px 2px; overflow: hidden; }
.tree { list-style: none; margin: 0; padding: 1px 0 0; flex: 1; overflow: hidden; white-space: nowrap; }
.tree li { display: flex; align-items: center; height: 16px; }
.tree .tg { width: 14px; height: 16px; }
.types li { padding-left: 4px; }
.types .tg { margin-right: 5px; }
.types li > .ic { margin-right: 5px; }
.types .kid {
  padding-left: 43px;
  --stop: 16px;
  background:
    repeating-linear-gradient(#999 0 1px, transparent 1px 2px) 12px 0 / 1px 16px no-repeat,
    repeating-linear-gradient(#999 0 1px, transparent 1px 2px) 31px 0 / 1px var(--stop) no-repeat,
    repeating-linear-gradient(90deg, #999 0 1px, transparent 1px 2px) 31px 8px / 12px 1px no-repeat;
}
.types .kid > .ic { margin-right: 4px; }
.types .last, .parts .last { --stop: 8px; }
.types .end { background-size: 0 0, 1px 16px, 12px 1px; }
.current { display: flex; align-items: center; gap: 4px; padding-right: 4px; background: #d9d9d9; }
.tree .tag { width: 13px; height: 15px; margin-left: 1px; }
.scroll { width: 17px; flex: none; display: flex; flex-direction: column; align-items: center; justify-content: space-between; background: #f0f0f0; border-right: 2px solid #fff; }
.scroll svg { width: 14px; height: 18px; }
.scroll i { width: 15px; background: #cdcdcd; }
.types-scroll i { flex: 425; }
.types-scroll::after { content: ""; order: 1; flex: 27; }
.types-scroll svg:last-child, .parts-scroll svg:last-child { order: 2; }
.parts-scroll svg:first-child { height: 21px; }
.parts-scroll i { flex: 109; }
.parts-scroll::after { content: ""; order: 1; flex: 417; }

.editor { flex: 1; min-width: 0; margin-left: 6px; display: flex; flex-direction: column; }
.panes { display: flex; flex: 1; min-height: 0; }
.components { width: 184px; flex: none; display: flex; flex-direction: column; font-feature-settings: "hwid"; }
.search { display: flex; align-items: center; height: 31px; flex: none; padding: 2px 1px; background: #fff; border-right: 2px solid #888c94; }
.search input { width: 157px; height: 24px; border: 1px solid #777; padding: 0 2px; background: #fff; line-height: 20px; }
.search input::placeholder { color: #777; opacity: 1; }
.search button { flex: 1; justify-content: center; }
.components .treebox { margin: 0; }
.parts li { padding-left: 23px; }
.parts .tg { margin-right: 5px; }
.parts li > .ic { margin-right: 4px; }
.parts .kid {
  padding-left: 60px;
  --stop: 16px;
  background:
    repeating-linear-gradient(#999 0 1px, transparent 1px 2px) 31px 0 / 1px 16px no-repeat,
    repeating-linear-gradient(#999 0 1px, transparent 1px 2px) 50px 0 / 1px var(--stop) no-repeat,
    repeating-linear-gradient(90deg, #999 0 1px, transparent 1px 2px) 50px 8px / 12px 1px no-repeat;
}
.parts .kid > .ic { margin-right: 5px; }
.selected { display: flex; align-items: center; gap: 4px; margin-left: -2px; padding: 0 5px 0 2px; background: #316ac5; color: #000; }

.props { flex: 1; min-width: 0; display: flex; flex-direction: column; margin: 0 1px 0 3px; background: #fff; border: 1px solid #d4d4d4; border-top: 0; font-feature-settings: "hwid"; }
.tabs { height: 22px; flex: none; display: flex; border-bottom: 1px solid #d4d4d4; }
.tab { height: 22px; padding: 0 7px; border: 1px solid #d4d4d4; border-width: 1px 1px 0 0; background: #fff; }
.sheet { flex: 1; min-height: 0; margin: 3px 2px 2px 3px; border: 1px solid #a0a0a0; overflow: hidden; }
table { border-collapse: separate; border-spacing: 0; table-layout: fixed; width: 370px; }
th, td { height: 19px; padding: 0; border: 1px solid #c0c0c0; border-width: 0 1px 1px 0; font-weight: 400; line-height: 18px; text-align: left; white-space: nowrap; }
thead th { height: 24px; background: linear-gradient(#fff, #efefef); text-align: center; }
.no { width: 22px; }
.name { width: 191px; }
.value { width: 126px; }
.extra { width: 31px; }
thead .value { background: linear-gradient(#f9d9a0, #f2c062); color: #5c005c; }
tbody th { text-align: center; background: linear-gradient(90deg, #fbfbfb, #efefef); }
td:nth-child(2) { padding-left: 19px; }
td:nth-child(3) { padding-left: 2px; }
td:nth-child(4) input { appearance: none; display: block; width: 13px; height: 13px; margin: 0 auto; border: 1px solid #333; background: #fff; }
.key td:nth-child(2) { color: #00f; }
.dim td, .folded td { color: #858585; }
.active th { background: #ffcf87; color: #5c005c; }
.active td:nth-child(2) { background: #0078d7; color: #fff; }
.active td:nth-child(3) { background: #d9eaf8; }
.folded td:nth-child(2) { padding-left: 2px; }
.folded button { display: inline-flex; width: 13px; height: 13px; margin-right: 4px; border: 1px solid #aaa; vertical-align: middle; }
.folded svg { width: 11px; height: 11px; }

/* status */
.status { display: flex; gap: 2px; height: 23px; padding: 3px 0 1px; flex: none; font-feature-settings: "hwid"; }
.cell { border: 1px solid #d0d0d0; background: linear-gradient(#fdfdfd, #efefef); padding-left: 1px; white-space: nowrap; line-height: 18px; overflow: hidden; }
.blank { width: 148px; }
.height { width: 78px; }
.base { width: 98px; }
.count { width: 48px; }
.tip { flex: 1; min-width: 0; font-feature-settings: normal; }
.fps { width: 71px; }

/* taskbar */
.taskbar { display: flex; align-items: stretch; height: 40px; flex: none; background: linear-gradient(90deg, #06171b, #071a1e 80%, #080a0b); color: #fff; }
.start { width: 48px; justify-content: center; background: #050708; }
.start svg { width: 16px; height: 16px; }
.cortana { display: flex; align-items: center; width: 344px; background: #f2f2f2; padding: 0 14px 0 9px; }
.ring { width: 22px; height: 22px; margin-right: 9px; }
.cortana input { flex: 1; font-size: 14px; min-width: 0; }
.cortana input::placeholder { color: #333; opacity: 1; }
.mic { width: 12px; height: 18px; }
.tb { width: 41px; justify-content: center; }
.tb svg { width: 24px; height: 24px; }
.taskview { width: 48px; }
.clover { width: 52px; }
.websearch { display: flex; align-items: center; width: 150px; height: 30px; margin: 5px 0 0 0; padding: 0 4px; gap: 4px; border: 1px solid #717171; background: #444; }
.websearch .ie { width: 19px; height: 20px; }
.websearch input { flex: 1; min-width: 0; }
.websearch input::placeholder { color: #aaa; opacity: 1; }
.apps { display: flex; }
.apps .tb:first-child { width: 52px; }
.apps .tb:first-child svg { width: 28px; height: 28px; }
.running { border-bottom: 2px solid #76b9ed; }
.on { background: #3a484c; }
.pager { width: 17px; background: #f0f0f0; display: flex; flex-direction: column; justify-content: space-between; align-items: center; margin-left: 2px; }
.pager svg { width: 14px; height: 18px; }
.tray { display: flex; align-items: center; gap: 6px; margin-left: auto; }
.tray svg { width: 18px; height: 18px; fill: none; stroke: #fff; }
.tray .wide { margin-left: 12px; }
.tray .kb svg { width: 24px; }
.tray .sg { width: 16px; height: 16px; stroke: none; margin: 0 -4px 0 4px; }
.tray .lang { font-size: 14px; }
.clock { flex-direction: column; justify-content: center; width: 94px; line-height: 18px; padding: 0 0 2px 4px; font-family: "Noto Sans", sans-serif; }
.notes { display: grid; width: 46px; justify-content: center; align-content: center; border-right: 1px solid #777; margin-right: 3px; }
.notes svg, .notes b { grid-area: 1 / 1; }
.notes svg { width: 26px; height: 26px; }
.notes b { padding: 9px 0 0 13px; font-size: 12px; }

/* floating items */
.meter { position: absolute; left: 714px; top: -35px; width: 54px; height: 54px; border-radius: 50%; border: 2px solid #e6f2e8; background: linear-gradient(#36b35c, #43c964); box-shadow: 0 4px 8px #0005; color: #fff; font: bold 12px/16px "Noto Sans", sans-serif; text-align: center; padding-top: 32px; }
.ime { position: absolute; right: 0; top: 39px; width: 193px; height: 24px; display: flex; align-items: center; justify-content: space-between; padding: 0 3px 0 20px; background: #fff; border: 1px solid #a9c6de; border-right: 0; color: #1b78d0; }
.ime button { font-size: 16px; font-weight: 700; }
.ime svg { width: 16px; height: 16px; }
.ime .s { position: absolute; left: -14px; top: -3px; width: 28px; height: 28px; }
.mark { position: absolute; border: 7px solid #f00; pointer-events: none; }
.mark-type { left: 30px; top: 517px; width: 138px; height: 31px; }
.mark-rows { left: 356px; top: 266px; width: 386px; height: 50px; }
```
